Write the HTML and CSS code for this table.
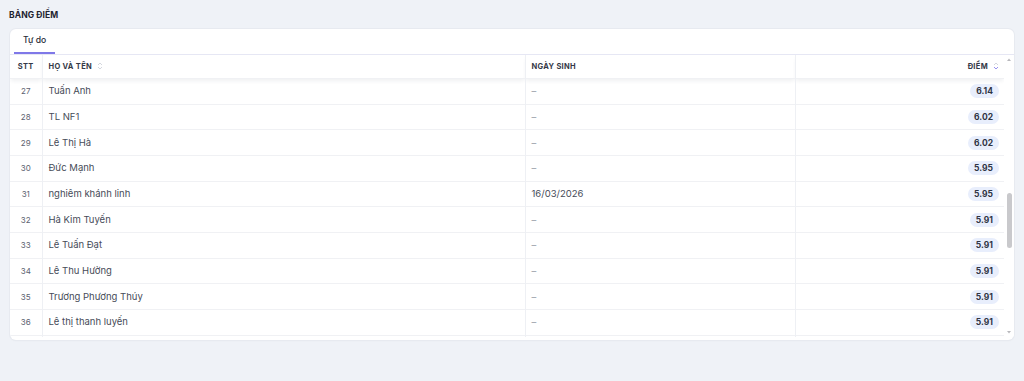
FILE: index.html
```html
<!DOCTYPE html>
<html lang="vi">
<head>
<meta charset="utf-8">
<title>Bảng điểm</title>
<link rel="stylesheet" href="styles.css">
</head>
<body>
<h1 class="page-title">BẢNG ĐIỂM</h1>
<section class="card">
  <nav class="tabs">
    <div class="tab active">Tự do</div>
  </nav>
  <div class="table-wrap">
    <div class="viewport">
      <table class="grid">
        <colgroup>
          <col class="c-stt"><col class="c-name"><col class="c-date"><col class="c-score">
        </colgroup>
        <thead>
          <tr>
            <th class="stt">STT</th>
            <th>HỌ VÀ TÊN <span class="sort"><svg width="6" height="8" viewBox="0 0 6 8"><path d="M1 3 L3 1 L5 3" fill="none" stroke="#cfd2da" stroke-width="0.9"/><path d="M1 5 L3 7 L5 5" fill="none" stroke="#cfd2da" stroke-width="0.9"/></svg></span></th>
            <th>NGÀY SINH</th>
            <th class="score">ĐIỂM <span class="sort"><svg width="6" height="8" viewBox="0 0 6 8"><path d="M1 3 L3 1 L5 3" fill="none" stroke="#cfd2da" stroke-width="0.9"/><path d="M1 5 L3 7 L5 5" fill="none" stroke="#8d86ee" stroke-width="0.9"/></svg></span></th>
          </tr>
        </thead>
        <tbody>
          <tr><td class="stt">27</td><td>Tuấn Anh</td><td class="dash">–</td><td class="score"><span class="badge">6.14</span></td></tr>
          <tr><td class="stt">28</td><td>TL NF1</td><td class="dash">–</td><td class="score"><span class="badge">6.02</span></td></tr>
          <tr><td class="stt">29</td><td>Lê Thị Hà</td><td class="dash">–</td><td class="score"><span class="badge">6.02</span></td></tr>
          <tr><td class="stt">30</td><td>Đức Mạnh</td><td class="dash">–</td><td class="score"><span class="badge">5.95</span></td></tr>
          <tr><td class="stt">31</td><td>nghiêm khánh linh</td><td>16/03/2026</td><td class="score"><span class="badge">5.95</span></td></tr>
          <tr><td class="stt">32</td><td>Hà Kim Tuyến</td><td class="dash">–</td><td class="score"><span class="badge">5.91</span></td></tr>
          <tr><td class="stt">33</td><td>Lê Tuấn Đạt</td><td class="dash">–</td><td class="score"><span class="badge">5.91</span></td></tr>
          <tr><td class="stt">34</td><td>Lê Thu Hường</td><td class="dash">–</td><td class="score"><span class="badge">5.91</span></td></tr>
          <tr><td class="stt">35</td><td>Trương Phương Thúy</td><td class="dash">–</td><td class="score"><span class="badge">5.91</span></td></tr>
          <tr><td class="stt">36</td><td>Lê thị thanh luyến</td><td class="dash">–</td><td class="score"><span class="badge">5.91</span></td></tr>
          <tr class="tail"><td></td><td></td><td></td><td></td></tr>
        </tbody>
      </table>
    </div>
    <div class="vscroll" aria-hidden="true">
      <div class="vs-btn"><svg width="10" height="9" viewBox="0 0 10 9"><path d="M3 6 L5 3.5 L7 6 Z" fill="#b8b8bc"/></svg></div>
      <div class="vs-track"><div class="vs-thumb"></div></div>
      <div class="vs-btn"><svg width="10" height="9" viewBox="0 0 10 9"><path d="M3 3 L5 5.5 L7 3 Z" fill="#b8b8bc"/></svg></div>
    </div>
  </div>
</section>
</body>
</html>
```

FILE: styles.css
```css
html, body {
  margin: 0;
  padding: 0;
}
body {
  background: #eff2f7;
  font-family: Inter, "Noto Sans", "Liberation Sans", sans-serif;
  color: #3a3f4d;
  padding: 9px 10px 0 10px;
  width: 1024px;
  height: 381px;
  box-sizing: border-box;
  overflow: hidden;
}
.page-title {
  margin: 0 0 0 -1px;
  font-size: 8.5px;
  line-height: 12px;
  font-weight: 700;
  color: #1e2330;
  letter-spacing: 0.1px;
}
.card {
  margin-top: 8px;
  width: 1004px;
  background: #ffffff;
  border-radius: 6px;
  box-shadow: 0 0 0 1px #e7eaf0, 0 1px 2px rgba(20, 30, 60, 0.04);
  padding-bottom: 3px;
  overflow: hidden;
}
.tabs {
  display: flex;
  padding-left: 4px;
  border-bottom: 1px solid #e6e7f4;
  height: 25px;
}
.tab {
  padding: 0 9px;
  font-size: 8.6px;
  font-weight: 500;
  color: #262b38;
  line-height: 23px;
  border-bottom: 2px solid transparent;
}
.tab.active {
  border-bottom-color: #7f78e8;
}
.table-wrap {
  display: flex;
  height: 282px;
}
.viewport {
  flex: 1;
  overflow: hidden;
}
.vscroll {
  width: 10px;
  display: flex;
  flex-direction: column;
  background: #ffffff;
}
.vs-btn {
  height: 9px;
  flex: none;
}
.vs-btn svg { display: block; }
.vs-track {
  flex: 1;
  padding-top: 129px;
}
.vs-thumb {
  margin-left: 3px;
  width: 5px;
  height: 55px;
  border-radius: 3px;
  background: #c9c9cc;
}
.grid {
  width: 100%;
  border-collapse: collapse;
  table-layout: fixed;
}
.c-stt { width: 32px; }
.c-name { width: 483px; }
.c-date { width: 270px; }
.c-score { width: auto; }
.grid th {
  background: #ffffff;
  height: 23px;
  padding: 0 6px;
  text-align: left;
  font-size: 7.5px;
  font-weight: 700;
  color: #343947;
  letter-spacing: 0.3px;
  border-left: 1px solid #eef0f4;
  box-shadow: 0 3px 4px -1px rgba(30, 40, 70, 0.07);
  white-space: nowrap;
}
.grid th:first-child { border-left: none; }
.grid th.stt { text-align: center; padding: 0; }
.grid th.score { text-align: right; padding-right: 5px; }
.sort {
  display: inline-block;
  vertical-align: middle;
  margin-left: 3px;
  margin-top: -2px;
}
.sort svg { display: block; }
.grid td {
  height: 24.67px;
  padding: 0 6px;
  line-height: 12px;
  font-size: 9.5px;
  color: #464b58;
  border-top: 1px solid #f0f1f4;
  border-left: 1px solid #eef0f4;
  white-space: nowrap;
  vertical-align: middle;
}
.grid td:first-child { border-left: none; }
.grid td.stt {
  text-align: center;
  padding-left: 0;
  padding-right: 0;
  font-size: 8px;
  color: #5d6270;
}
.grid td.dash { color: #9a9ea9; }
.grid td.score {
  text-align: right;
  padding-right: 5px;
}
.badge {
  display: inline-block;
  padding: 0 6px;
  height: 14px;
  line-height: 14px;
  border-radius: 7px;
  background: #e8eefc;
  color: #2f3444;
  font-size: 8.5px;
  font-weight: 700;
  text-align: center;
  vertical-align: middle;
}
```
